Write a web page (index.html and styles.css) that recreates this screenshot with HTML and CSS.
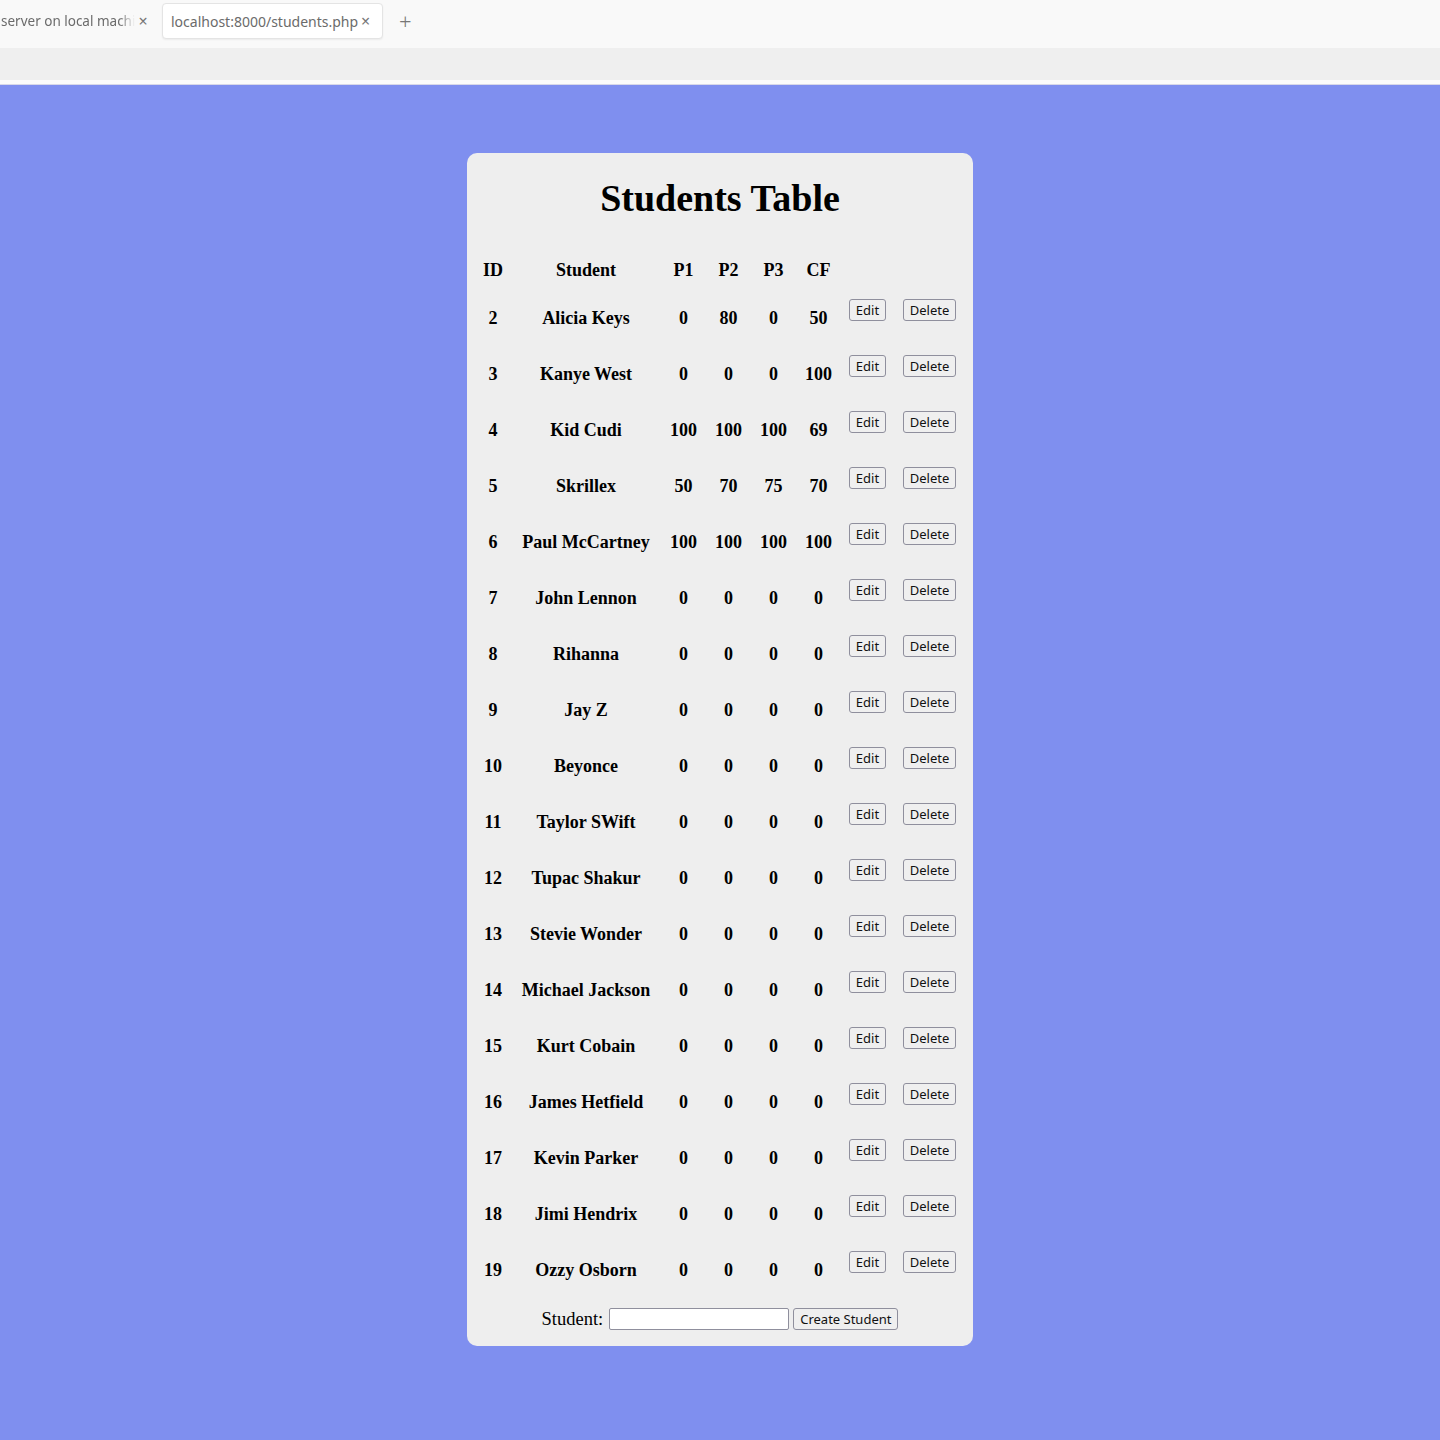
FILE: index.html
```html
<!DOCTYPE html>
<html>
<head>
<meta charset="utf-8">
<link rel="stylesheet" href="styles.css">
</head>
<body>
<div class="tabbar">
  <div class="tab tab-prev"><span class="tab-title">server on local machi</span><span class="tab-x">×</span></div>
  <div class="tab tab-active"><span class="tab-title">localhost:8000/students.php</span><span class="tab-x">×</span></div>
  <div class="tab-new">+</div>
</div>
<div class="toolbar"></div>
<div class="toolbar-line"></div>
<main class="page">
  <div class="card">
    <h1 class="title">Students Table</h1>
    <table class="students">
      <thead>
        <tr><th class="c-id">ID</th><th class="c-name">Student</th><th class="c-n">P1</th><th class="c-n">P2</th><th class="c-n">P3</th><th class="c-n">CF</th><th class="c-edit"></th><th class="c-del"></th></tr>
      </thead>
      <tbody>
        <tr><td>2</td><td>Alicia Keys</td><td>0</td><td>80</td><td>0</td><td>50</td><td class="btn-cell"><button class="btn">Edit</button></td><td class="btn-cell"><button class="btn">Delete</button></td></tr>
        <tr><td>3</td><td>Kanye West</td><td>0</td><td>0</td><td>0</td><td>100</td><td class="btn-cell"><button class="btn">Edit</button></td><td class="btn-cell"><button class="btn">Delete</button></td></tr>
        <tr><td>4</td><td>Kid Cudi</td><td>100</td><td>100</td><td>100</td><td>69</td><td class="btn-cell"><button class="btn">Edit</button></td><td class="btn-cell"><button class="btn">Delete</button></td></tr>
        <tr><td>5</td><td>Skrillex</td><td>50</td><td>70</td><td>75</td><td>70</td><td class="btn-cell"><button class="btn">Edit</button></td><td class="btn-cell"><button class="btn">Delete</button></td></tr>
        <tr><td>6</td><td>Paul McCartney</td><td>100</td><td>100</td><td>100</td><td>100</td><td class="btn-cell"><button class="btn">Edit</button></td><td class="btn-cell"><button class="btn">Delete</button></td></tr>
        <tr><td>7</td><td>John Lennon</td><td>0</td><td>0</td><td>0</td><td>0</td><td class="btn-cell"><button class="btn">Edit</button></td><td class="btn-cell"><button class="btn">Delete</button></td></tr>
        <tr><td>8</td><td>Rihanna</td><td>0</td><td>0</td><td>0</td><td>0</td><td class="btn-cell"><button class="btn">Edit</button></td><td class="btn-cell"><button class="btn">Delete</button></td></tr>
        <tr><td>9</td><td>Jay Z</td><td>0</td><td>0</td><td>0</td><td>0</td><td class="btn-cell"><button class="btn">Edit</button></td><td class="btn-cell"><button class="btn">Delete</button></td></tr>
        <tr><td>10</td><td>Beyonce</td><td>0</td><td>0</td><td>0</td><td>0</td><td class="btn-cell"><button class="btn">Edit</button></td><td class="btn-cell"><button class="btn">Delete</button></td></tr>
        <tr><td>11</td><td>Taylor SWift</td><td>0</td><td>0</td><td>0</td><td>0</td><td class="btn-cell"><button class="btn">Edit</button></td><td class="btn-cell"><button class="btn">Delete</button></td></tr>
        <tr><td>12</td><td>Tupac Shakur</td><td>0</td><td>0</td><td>0</td><td>0</td><td class="btn-cell"><button class="btn">Edit</button></td><td class="btn-cell"><button class="btn">Delete</button></td></tr>
        <tr><td>13</td><td>Stevie Wonder</td><td>0</td><td>0</td><td>0</td><td>0</td><td class="btn-cell"><button class="btn">Edit</button></td><td class="btn-cell"><button class="btn">Delete</button></td></tr>
        <tr><td>14</td><td>Michael Jackson</td><td>0</td><td>0</td><td>0</td><td>0</td><td class="btn-cell"><button class="btn">Edit</button></td><td class="btn-cell"><button class="btn">Delete</button></td></tr>
        <tr><td>15</td><td>Kurt Cobain</td><td>0</td><td>0</td><td>0</td><td>0</td><td class="btn-cell"><button class="btn">Edit</button></td><td class="btn-cell"><button class="btn">Delete</button></td></tr>
        <tr><td>16</td><td>James Hetfield</td><td>0</td><td>0</td><td>0</td><td>0</td><td class="btn-cell"><button class="btn">Edit</button></td><td class="btn-cell"><button class="btn">Delete</button></td></tr>
        <tr><td>17</td><td>Kevin Parker</td><td>0</td><td>0</td><td>0</td><td>0</td><td class="btn-cell"><button class="btn">Edit</button></td><td class="btn-cell"><button class="btn">Delete</button></td></tr>
        <tr><td>18</td><td>Jimi Hendrix</td><td>0</td><td>0</td><td>0</td><td>0</td><td class="btn-cell"><button class="btn">Edit</button></td><td class="btn-cell"><button class="btn">Delete</button></td></tr>
        <tr><td>19</td><td>Ozzy Osborn</td><td>0</td><td>0</td><td>0</td><td>0</td><td class="btn-cell"><button class="btn">Edit</button></td><td class="btn-cell"><button class="btn">Delete</button></td></tr>
      </tbody>
    </table>
    <form class="create">
      <label class="create-label">Student:</label>
      <input class="create-input" type="text">
      <button class="btn btn-create" type="button">Create Student</button>
    </form>
  </div>
</main>
</body>
</html>
```
FILE: styles.css
```css
html, body {
  margin: 0;
  padding: 0;
}
body {
  background: #7f8fef;
  font-family: "Liberation Serif", serif;
  width: 1440px;
  min-height: 1440px;
}
.tabbar {
  height: 48px;
  box-sizing: border-box;
  padding-top: 3px;
  background: #f9f9f9;
  display: flex;
  align-items: flex-start;
  font-family: "Noto Sans", "Open Sans", sans-serif;
  font-size: 14px;
  color: #6b6b6b;
}
.tab {
  display: flex;
  align-items: center;
  height: 36px;
  box-sizing: border-box;
  white-space: nowrap;
}
.tab-prev {
  width: 162px;
  padding-left: 1px;
}
.tab-prev .tab-title {
  font-size: 13.5px;
  -webkit-mask-image: linear-gradient(to right, #000 88%, transparent);
  mask-image: linear-gradient(to right, #000 88%, transparent);
}
.tab-active {
  width: 221px;
  padding-left: 8px;
  background: #ffffff;
  border: 1px solid #e4e4e4;
  border-radius: 4px;
  box-shadow: 0 1px 2px rgba(0,0,0,0.06);
}
.tab-title {
  display: inline-block;
}
.tab-x {
  margin-left: 3px;
  font-size: 16px;
  color: #777;
}
.tab-new {
  margin-left: 16px;
  height: 36px;
  line-height: 36px;
  font-size: 22px;
  color: #777;
  font-weight: 300;
}
.toolbar {
  height: 32px;
  background: #efefef;
}
.toolbar-line {
  height: 4px;
  background: #fbfbfb;
  border-bottom: 1px solid #d8d8e8;
}
.page {
  display: flex;
  justify-content: center;
  padding-top: 68px;
  padding-bottom: 94px;
}
.card {
  width: 506px;
  box-sizing: border-box;
  background: #eeeeee;
  border-radius: 10px;
  padding: 0 8px;
}
.title {
  margin: 25px 0 32px;
  height: 40px;
  line-height: 40px;
  font-size: 38px;
  font-weight: bold;
  text-align: center;
  color: #000;
}
.students {
  border-collapse: collapse;
  border-spacing: 0;
  table-layout: fixed;
  width: 490px;
  font-size: 18px;
  font-weight: bold;
  color: #000;
}
.students th {
  height: 40px;
  padding: 0;
  text-align: center;
  vertical-align: middle;
  font-weight: bold;
}
.students td {
  height: 56px;
  padding: 0;
  text-align: center;
  vertical-align: middle;
}
.c-id { width: 36px; }
.c-name { width: 150px; }
.c-n { width: 45px; }
.c-edit { width: 53px; }
.c-del { width: 71px; }
.students td.btn-cell {
  vertical-align: top;
  padding-top: 9px;
  box-sizing: border-box;
}
.btn {
  font-family: "Noto Sans", "Open Sans", sans-serif;
  font-size: 13px;
  line-height: 16px;
  height: 22px;
  padding: 1px 6px;
  color: #111;
  background: #efefef;
  border: 1px solid #8f8f9d;
  border-radius: 3px;
  box-sizing: border-box;
  font-weight: normal;
}
.create {
  display: flex;
  justify-content: center;
  align-items: center;
  margin: 0;
  padding: 10px 0 16px;
  gap: 4px;
}
.create-label {
  font-size: 18.5px;
  font-family: "Liberation Serif", serif;
  margin-right: 2px;
}
.create-input {
  width: 180px;
  height: 22px;
  box-sizing: border-box;
  border: 1px solid #8f8f9d;
  border-radius: 2px;
  background: #fff;
  padding: 0 2px;
  margin: 0;
}
.btn-create {
  padding: 1px 6px;
}
```
